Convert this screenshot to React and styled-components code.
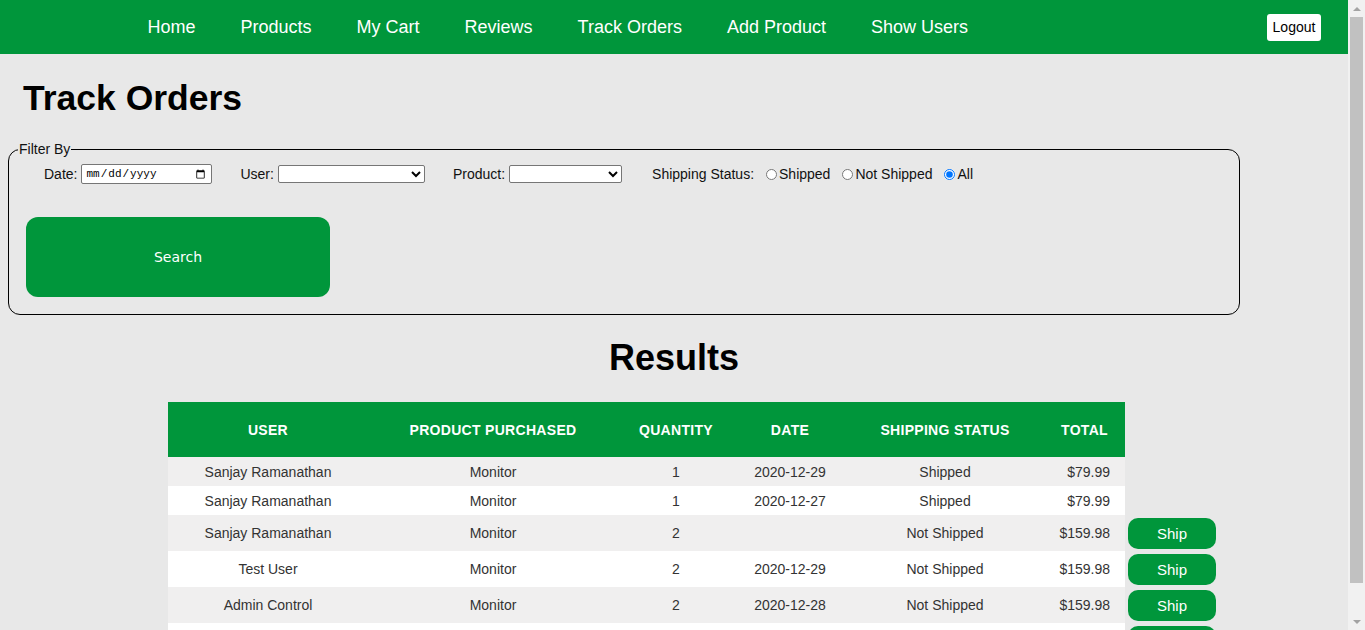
import React from 'react'
import styled, { createGlobalStyle } from 'styled-components'

const GREEN = '#00963b'

const GlobalStyle = createGlobalStyle`
    html, body {
        margin: 0;
        padding: 0;
        background: #e8e8e8;
        font-family: "Liberation Sans", Arial, sans-serif;
    }
    #root {
        width: calc(100% - 17px);
    }
`

// imitation of the browser's vertical scrollbar seen in the screenshot
const ScrollTrack = styled.div`
    position: fixed;
    top: 0;
    right: 0;
    bottom: 0;
    width: 17px;
    background: #f1f1f1;
    display: flex;
    flex-direction: column;
    align-items: center;
`

const ScrollArrow = styled.div`
    height: 17px;
    display: flex;
    align-items: center;
    justify-content: center;
    &::before {
        content: '';
        border-left: 4px solid transparent;
        border-right: 4px solid transparent;
        ${p => (p.$down
            ? 'border-top: 4px solid #a3a3a3;'
            : 'border-bottom: 4px solid #a3a3a3;')}
    }
`

const ScrollThumb = styled.div`
    width: 13px;
    height: 566px;
    background: #c1c1c1;
`

const Spacer = styled.div`
    flex: 1;
`

const NavBar = styled.nav`
    height: 54px;
    background: ${GREEN};
    display: flex;
    align-items: center;
    padding-left: 125px;
    padding-right: 27px;
`

const NavLinks = styled.ul`
    display: flex;
    list-style: none;
    margin: 0;
    padding: 0;
    flex: 1;
`

const NavLink = styled.li`
    color: #fff;
    font-size: 18px;
    padding: 1px 22.5px 0;
    cursor: pointer;
`

const LogoutButton = styled.button`
    background: #fff;
    color: #000;
    border: none;
    border-radius: 3px;
    font-family: "Liberation Sans", Arial, sans-serif;
    font-size: 14px;
    height: 27px;
    width: 54px;
    padding: 0;
`

const Main = styled.main`
    padding: 0 8px 40px;
`

const Title = styled.h1`
    font-size: 35.5px;
    margin: 24px 15px 22px;
    color: #000;
`

const FilterBox = styled.fieldset`
    width: 1232px;
    box-sizing: border-box;
    margin: 0;
    border: 1px solid #000;
    border-radius: 12px;
    padding: 0 18px 17px;
`

const Legend = styled.legend`
    font-size: 14px;
    padding: 0 1px;
    margin-left: -9px;
    color: #111;
`

const FilterRow = styled.div`
    display: flex;
    align-items: center;
    gap: 28px;
    padding-left: 17px;
    height: 20px;
    margin-top: 7px;
`

const Field = styled.label`
    display: flex;
    align-items: center;
    gap: 4px;
    font-size: 14px;
    color: #111;
`

const DateInput = styled.input`
    width: 131px;
    height: 20px;
    box-sizing: border-box;
    font-family: "Liberation Mono", monospace;
    font-size: 11px;
    border: 1px solid #767676;
    border-radius: 2px;
    background: #fff;
    color: #000;
    padding: 0 3px;
`

const Select = styled.select`
    width: ${p => p.$w}px;
    height: 18px;
    box-sizing: border-box;
    border: 1px solid #767676;
    border-radius: 2px;
    background: #fff;
    font-size: 13px;
`

const RadioGroup = styled.div`
    display: flex;
    align-items: center;
    gap: 12px;
    margin-left: 2px;
`

const RadioLabel = styled.label`
    display: flex;
    align-items: center;
    font-size: 14px;
    color: #111;
    & input {
        margin: 0 2px 0 0;
        width: 11px;
        height: 11px;
    }
`

const SearchButton = styled.button`
    display: block;
    margin-top: 33px;
    width: 304px;
    height: 80px;
    background: ${GREEN};
    color: #fff;
    border: none;
    border-radius: 12px;
    font-family: "DejaVu Sans", Verdana, sans-serif;
    font-size: 14px;
    margin-left: -1px;
`

const ResultsTitle = styled.h2`
    font-size: 36px;
    text-align: center;
    margin: 22px 0 23px;
    color: #000;
`

const Table = styled.table`
    border-collapse: collapse;
    table-layout: fixed;
    margin-left: 160px;
    width: 1051px;
`

const HeadCell = styled.th`
    background: ${GREEN};
    color: #fff;
    font-size: 14px;
    font-weight: bold;
    letter-spacing: 0.3px;
    height: 55px;
    padding: 0;
    text-align: center;
`

const Row = styled.tr`
    height: ${p => (p.$tall ? 36 : 29)}px;
`

const Cell = styled.td`
    background: ${p => (p.$odd ? '#f0efef' : '#fff')};
    color: #333;
    font-size: 14px;
    text-align: ${p => (p.$right ? 'right' : 'center')};
    padding: ${p => (p.$right ? '0 15px 0 0' : '0')};
`

const ActionCell = styled.td`
    padding: 2px 0 1px 3px;
`

const ShipButton = styled.button`
    width: 88px;
    height: 31px;
    background: ${GREEN};
    color: #fff;
    border: none;
    border-radius: 10px;
    font-family: "Liberation Sans", Arial, sans-serif;
    font-size: 15px;
    padding: 0;
`

const links = ['Home', 'Products', 'My Cart', 'Reviews', 'Track Orders', 'Add Product', 'Show Users']

const columns = [
    ['User', 200],
    ['Product Purchased', 250],
    ['Quantity', 116],
    ['Date', 112],
    ['Shipping Status', 198],
    ['Total', 81],
]

const orders = [
    { user: 'Sanjay Ramanathan', product: 'Monitor', qty: 1, date: '2020-12-29', shipped: true, total: '$79.99' },
    { user: 'Sanjay Ramanathan', product: 'Monitor', qty: 1, date: '2020-12-27', shipped: true, total: '$79.99' },
    { user: 'Sanjay Ramanathan', product: 'Monitor', qty: 2, date: '', shipped: false, total: '$159.98' },
    { user: 'Test User', product: 'Monitor', qty: 2, date: '2020-12-29', shipped: false, total: '$159.98' },
    { user: 'Admin Control', product: 'Monitor', qty: 2, date: '2020-12-28', shipped: false, total: '$159.98' },
    { user: 'Test User', product: 'Keyboard', qty: 1, date: '2020-12-30', shipped: false, total: '$49.99' },
    { user: 'Admin Control', product: 'Mouse', qty: 3, date: '2020-12-31', shipped: false, total: '$59.97' },
]

export default function App() {
    return (
        <>
            <GlobalStyle />
            <NavBar>
                <NavLinks>
                    {links.map(l => <NavLink key={l}>{l}</NavLink>)}
                </NavLinks>
                <LogoutButton>Logout</LogoutButton>
            </NavBar>
            <Main>
                <Title>Track Orders</Title>
                <FilterBox>
                    <Legend>Filter By</Legend>
                    <FilterRow>
                        <Field>Date: <DateInput type="date" /></Field>
                        <Field>User: <Select $w={147}><option></option></Select></Field>
                        <Field>Product: <Select $w={113}><option></option></Select></Field>
                        <RadioGroup>
                            <Field>Shipping Status:</Field>
                            <RadioLabel><input type="radio" name="ship" />Shipped</RadioLabel>
                            <RadioLabel><input type="radio" name="ship" />Not Shipped</RadioLabel>
                            <RadioLabel><input type="radio" name="ship" defaultChecked />All</RadioLabel>
                        </RadioGroup>
                    </FilterRow>
                    <SearchButton>Search</SearchButton>
                </FilterBox>
                <ResultsTitle>Results</ResultsTitle>
                <Table>
                    <colgroup>
                        {columns.map(([name, w]) => <col key={name} style={{ width: w }} />)}
                        <col style={{ width: 94 }} />
                    </colgroup>
                    <thead>
                        <tr>
                            {columns.map(([name]) => <HeadCell key={name}>{name.toUpperCase()}</HeadCell>)}
                        </tr>
                    </thead>
                    <tbody>
                        {orders.map((o, i) => {
                            const odd = i % 2 === 0
                            return (
                                <Row key={i} $tall={!o.shipped}>
                                    <Cell $odd={odd}>{o.user}</Cell>
                                    <Cell $odd={odd}>{o.product}</Cell>
                                    <Cell $odd={odd}>{o.qty}</Cell>
                                    <Cell $odd={odd}>{o.date}</Cell>
                                    <Cell $odd={odd}>{o.shipped ? 'Shipped' : 'Not Shipped'}</Cell>
                                    <Cell $odd={odd} $right>{o.total}</Cell>
                                    {!o.shipped && <ActionCell><ShipButton>Ship</ShipButton></ActionCell>}
                                </Row>
                            )
                        })}
                    </tbody>
                </Table>
            </Main>
            <ScrollTrack>
                <ScrollArrow />
                <ScrollThumb />
                <Spacer />
                <ScrollArrow $down />
            </ScrollTrack>
        </>
    )
}
